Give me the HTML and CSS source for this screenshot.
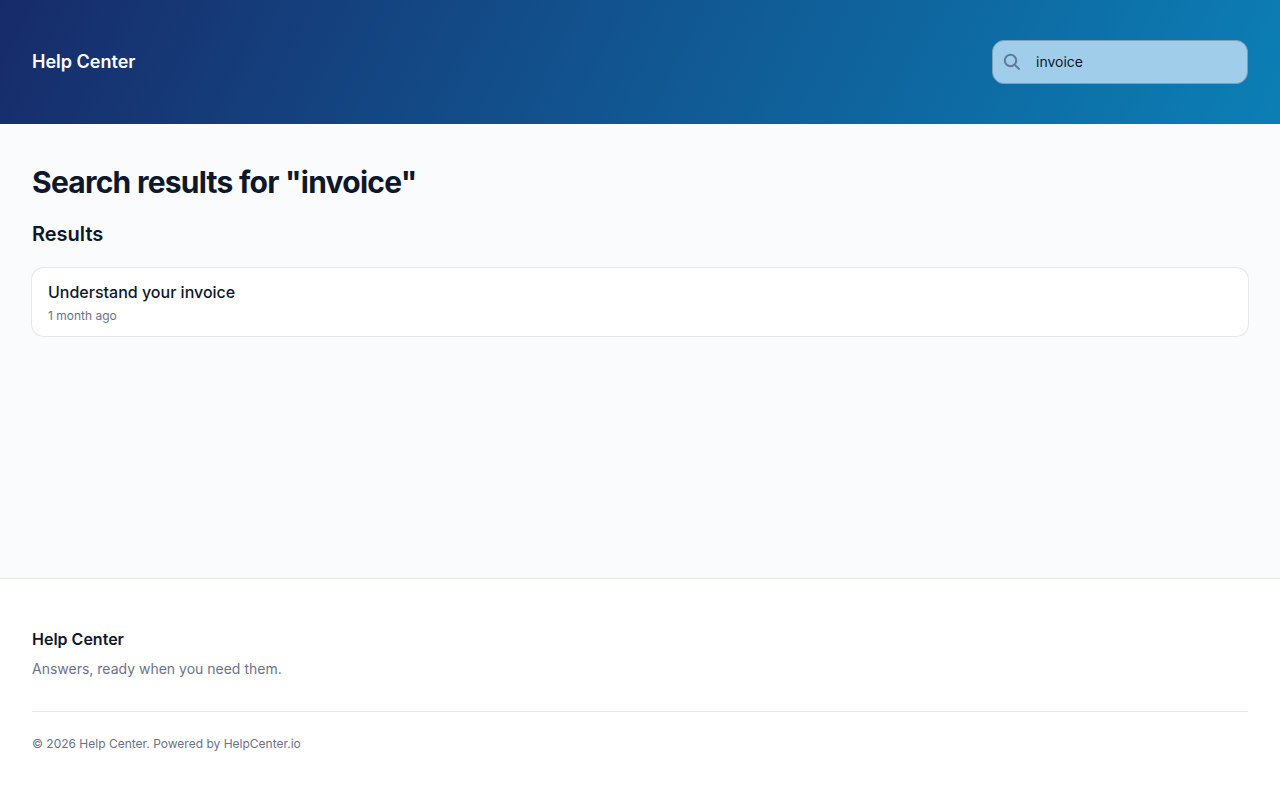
FILE: index.html
```html
<!DOCTYPE html>
<html lang="en">
<head>
  <meta charset="UTF-8">
  <meta name="viewport" content="width=device-width, initial-scale=1.0">
  <title>Search results - Help Center</title>
  <link rel="stylesheet" href="styles.css">
</head>
<body>
  <header class="header">
    <a class="brand" href="#">Help Center</a>
    <form class="search" role="search">
      <svg class="search-icon" viewBox="0 0 20 20" fill="none" stroke="currentColor" stroke-width="2" aria-hidden="true">
        <circle cx="8.5" cy="8.5" r="5.7"/>
        <path d="M12.6 12.6L17.6 17.6"/>
      </svg>
      <input class="search-input" type="text" name="q" value="invoice" aria-label="Search">
    </form>
  </header>

  <main class="main">
    <h1>Search results for "invoice"</h1>
    <h2>Results</h2>
    <ul class="results">
      <li>
        <a class="result" href="#">
          <span class="result-title">Understand your invoice</span>
          <span class="result-date">1 month ago</span>
        </a>
      </li>
    </ul>
  </main>

  <footer class="footer">
    <h3>Help Center</h3>
    <p class="tagline">Answers, ready when you need them.</p>
    <p class="copyright">© 2026 Help Center. Powered by <a href="#">HelpCenter.io</a></p>
  </footer>
</body>
</html>
```
FILE: styles.css
```css
* {
  box-sizing: border-box;
}

body {
  margin: 0;
  min-height: 100vh;
  display: flex;
  flex-direction: column;
  font-family: Inter, sans-serif;
  background-color: #fafbfd;
  color: #0f172a;
}

h1, h2, h3, p, ul {
  margin: 0;
  padding: 0;
}

a {
  color: inherit;
  text-decoration: none;
}

/* Header */
.header {
  display: flex;
  justify-content: space-between;
  align-items: center;
  padding: 40px 32px;
  background: linear-gradient(115deg, #172b69, #115691 50%, #0b7fb5);
}

.brand {
  color: #fff;
  font-size: 18px;
  font-weight: 600;
  line-height: 28px;
}

.search {
  position: relative;
  width: 256px;
}

.search-icon {
  position: absolute;
  top: 12px;
  left: 10px;
  width: 20px;
  height: 20px;
  color: #627a9a;
}

.search-input {
  display: block;
  width: 100%;
  height: 44px;
  padding: 0 16px 2px 43px;
  border: 1px solid #7f9fb5;
  border-radius: 12px;
  background-color: #9fcdea;
  color: #0f172a;
  font-family: inherit;
  font-size: 14px;
}

/* Results */
.main {
  flex: 1;
  padding: 40px 32px;
}

h1 {
  font-size: 30px;
  line-height: 36px;
  letter-spacing: -0.025em;
}

h2 {
  margin-top: 20px;
  font-size: 20px;
  font-weight: 600;
  line-height: 28px;
}

.results {
  margin-top: 20px;
  list-style: none;
}

.result {
  display: block;
  padding: 12px 16px;
  border-radius: 12px;
  background-color: #fff;
  box-shadow: 0 0 0 1px #e5e7eb;
}

.result-title {
  display: block;
  font-weight: 500;
  line-height: 24px;
}

.result-date {
  display: block;
  margin-top: 4px;
  color: #6b7288;
  font-size: 12px;
  line-height: 16px;
}

/* Footer */
.footer {
  padding: 48px 32px;
  border-top: 1px solid #e5e7eb;
  background-color: #fff;
  color: #6b7288;
}

h3 {
  color: #0f172a;
  font-size: 16px;
  font-weight: 600;
  line-height: 24px;
}

.tagline {
  margin-top: 8px;
  font-size: 14px;
  line-height: 20px;
}

.copyright {
  margin-top: 32px;
  padding-top: 24px;
  border-top: 1px solid #e5e7eb;
  font-size: 12px;
  line-height: 16px;
}
```
